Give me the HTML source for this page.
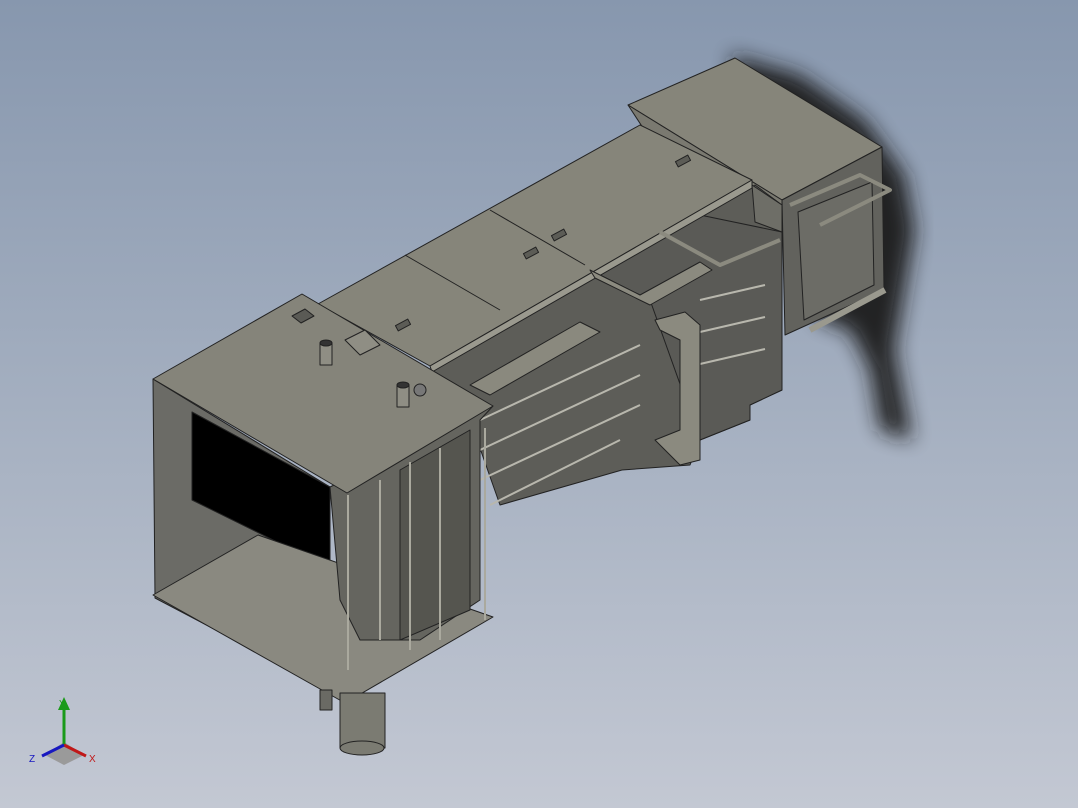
<!DOCTYPE html>
<html><head><style>
html,body{margin:0;padding:0;}
body{width:1078px;height:808px;overflow:hidden;background:linear-gradient(#8797ae 0%,#a4afc0 50%,#c3c8d3 100%);font-family:"Liberation Sans",sans-serif;}
svg{position:absolute;left:0;top:0}
</style></head><body>
<svg width="1078" height="808" viewBox="0 0 1078 808">
<defs><filter id="b"><feGaussianBlur stdDeviation="10"/></filter></defs>
<path d="M730,55 L800,75 L865,120 L905,175 L915,230 L905,290 L895,350 L912,440 L880,430 L870,370 L850,330 L820,320 L800,260 L770,180 Z" fill="#1a1a1a" filter="url(#b)" opacity="0.95"/>
<g stroke="#222" stroke-width="1" stroke-linejoin="round">
<polygon points="628,105 735,58 882,147 782,200" fill="#86857a"/>
<polygon points="782,200 882,147 884,290 785,335" fill="#62625d"/>
<polygon points="798,212 872,182 874,285 804,320" fill="#6c6c66"/>
<polygon points="628,105 782,200 782,240 700,215" fill="#7a7970"/>
<polygon points="430,366 755,185 782,205 782,390 750,405 750,420 700,440 690,465 622,470 500,505 470,420" fill="#5d5d58"/>
<polygon points="590,270 700,215 782,232 782,390 750,405 750,420 700,440 650,300" fill="#5a5a56"/>
<polygon points="752,185 782,205 782,232 755,222" fill="#6e6e67"/>
<polygon points="318,304 640,125 752,180 430,366" fill="#86857a"/>
<polygon points="430,366 752,180 752,188 432,372" fill="#9a998e"/>
<line x1="490" y1="210" x2="585" y2="265"/>
<line x1="405" y1="255" x2="500" y2="310"/>
<rect x="676" y="158" width="14" height="6" fill="#5c5c56" transform="rotate(-28 683 161)"/>
<rect x="552" y="232" width="14" height="6" fill="#5c5c56" transform="rotate(-28 559 235)"/>
<rect x="524" y="250" width="14" height="6" fill="#5c5c56" transform="rotate(-28 531 253)"/>
<rect x="396" y="322" width="14" height="6" fill="#5c5c56" transform="rotate(-28 403 325)"/>
<polygon points="590,270 640,295 700,262 712,270 650,305 595,278" fill="#8b8a7f"/>
<polyline points="660,232 720,265 780,240" fill="none" stroke="#8b8a7f" stroke-width="4"/>
<polyline points="790,205 860,175 890,190 820,225" fill="none" stroke="#8b8a7f" stroke-width="4"/>
<line x1="810" y1="330" x2="885" y2="290" stroke="#9a998e" stroke-width="6"/>
<g stroke="#b8b7ad" fill="none" stroke-width="2">
<line x1="480" y1="420" x2="640" y2="345"/><line x1="480" y1="450" x2="640" y2="375"/><line x1="480" y1="480" x2="640" y2="405"/><line x1="490" y1="505" x2="620" y2="440"/>
<line x1="700" y1="300" x2="765" y2="285"/><line x1="700" y1="332" x2="765" y2="317"/><line x1="700" y1="364" x2="765" y2="349"/>
</g>
<polygon points="470,385 580,322 600,332 490,395" fill="#8a897e"/>
<polygon points="655,320 685,312 700,325 700,460 680,465 655,440 680,430 680,340 660,330" fill="#8b8a7f"/>
<polygon points="153,379 330,487 330,690 155,598" fill="#6b6b66"/>
<polygon points="192,412 330,487 330,568 192,500" fill="#000"/>
<polygon points="153,595 258,535 493,617 345,703" fill="#8a8980"/>
<polygon points="330,487 493,406 480,420 480,600 420,640 360,640 340,600" fill="#65655f"/>
<polygon points="400,470 470,430 470,610 400,640" fill="#55554f"/>
<g stroke="#aaa99e" stroke-width="2"><line x1="348" y1="495" x2="348" y2="670"/><line x1="380" y1="480" x2="380" y2="640"/><line x1="410" y1="462" x2="410" y2="650"/><line x1="440" y1="448" x2="440" y2="640"/><line x1="485" y1="428" x2="485" y2="620"/></g>
<polygon points="153,379 302,294 493,406 347,493" fill="#85847a"/>
<polygon points="292,316 305,309 314,316 301,323" fill="#5a5a55"/>
<rect x="320" y="343" width="12" height="22" fill="#8f8e84"/>
<ellipse cx="326" cy="343" rx="6" ry="3" fill="#333"/>
<rect x="397" y="385" width="12" height="22" fill="#8f8e84"/>
<ellipse cx="403" cy="385" rx="6" ry="3" fill="#333"/>
<polygon points="345,340 365,330 380,345 360,355" fill="#8f8e84"/>
<circle cx="420" cy="390" r="6" fill="#777"/>
<rect x="340" y="693" width="45" height="55" fill="#7b7b72"/>
<ellipse cx="362" cy="748" rx="22" ry="7" fill="#7b7b72"/>
<rect x="320" y="690" width="12" height="20" fill="#6a6a64"/>
</g>
<polygon points="45,755 64,742 84,755 64,765" fill="#9a9a9a"/>
<line x1="64" y1="745" x2="64" y2="708" stroke="#1a9a1a" stroke-width="3"/>
<polygon points="58,710 64,697 70,710" fill="#1a9a1a"/>
<line x1="64" y1="745" x2="86" y2="756" stroke="#c01818" stroke-width="3"/>
<line x1="64" y1="745" x2="42" y2="756" stroke="#1818c0" stroke-width="3"/>
<text x="59" y="707" font-size="10" fill="#1a9a1a">Y</text>
<text x="89" y="762" font-size="10" fill="#c01818">X</text>
<text x="29" y="762" font-size="10" fill="#1818c0">Z</text>
</svg>
</body></html>
